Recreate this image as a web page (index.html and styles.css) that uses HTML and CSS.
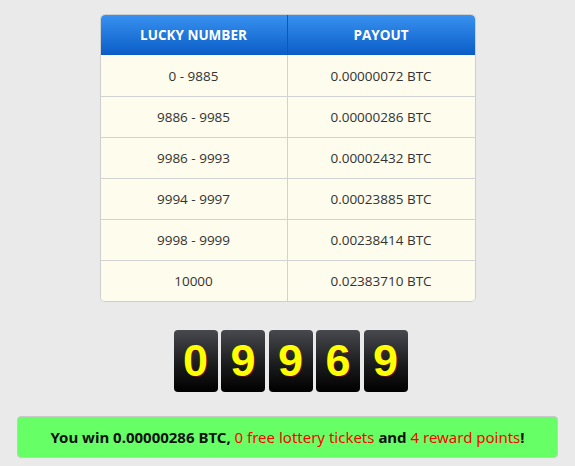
FILE: index.html
```html
<!DOCTYPE html>
<html>
<head>
<meta charset="utf-8">
<link rel="stylesheet" href="styles.css">
</head>
<body>
<div class="page">
  <table class="payouts">
    <thead>
      <tr><th>LUCKY NUMBER</th><th>PAYOUT</th></tr>
    </thead>
    <tbody>
      <tr><td>0 - 9885</td><td>0.00000072 BTC</td></tr>
      <tr><td>9886 - 9985</td><td>0.00000286 BTC</td></tr>
      <tr><td>9986 - 9993</td><td>0.00002432 BTC</td></tr>
      <tr><td>9994 - 9997</td><td>0.00023885 BTC</td></tr>
      <tr><td>9998 - 9999</td><td>0.00238414 BTC</td></tr>
      <tr><td>10000</td><td>0.02383710 BTC</td></tr>
    </tbody>
  </table>
  <div class="digits">
    <span class="digit">0</span><span class="digit">9</span><span class="digit">9</span><span class="digit">6</span><span class="digit">9</span>
  </div>
  <div class="result">You win 0.00000286 BTC, <span class="red">0 free lottery tickets</span> and <span class="red">4 reward points</span>!</div>
</div>
</body>
</html>
```
FILE: styles.css
```css
html, body {
  margin: 0;
  padding: 0;
  background: #eaeaea;
}
.page {
  width: 575px;
  padding-top: 15px;
  display: flex;
  flex-direction: column;
  align-items: center;
}
.payouts {
  width: 374px;
  border-collapse: separate;
  border-spacing: 0;
  font-family: "Open Sans", sans-serif;
  font-size: 13.5px;
  color: #333;
  border-radius: 4px;
  box-shadow: 0 0 0 1px #cfcfcf;
  overflow: hidden;
}
.payouts th {
  height: 40px;
  padding: 0;
  color: #fff;
  font-weight: bold;
  font-size: 13.5px;
  background: linear-gradient(#3891f0, #0a5dc6);
  width: 50%;
}
.payouts th:first-child {
  border-right: 1px solid #0b5aba;
  border-top-left-radius: 4px;
}
.payouts th:last-child {
  border-top-right-radius: 4px;
}
.payouts td {
  height: 40px;
  padding: 0;
  text-align: center;
  background: #fefcec;
  border-top: 1px solid #d2d2d2;
}
.payouts tbody tr:first-child td {
  border-top: none;
  height: 41px;
}
.payouts td:first-child {
  border-right: 1px solid #d2d2d2;
}
.digits {
  display: flex;
  gap: 3.5px;
  margin-top: 29px;
  padding-left: 6px;
}
.digit {
  width: 44px;
  height: 62px;
  border-radius: 4px;
  background: linear-gradient(#47494e, #1b1c1e 55%, #000);
  color: #ffff00;
  font-family: "Liberation Sans", Arial, sans-serif;
  font-weight: bold;
  font-size: 45px;
  line-height: 62px;
  text-align: center;
  text-shadow: 1px 1px 0 #5a1010;
}
.result {
  margin-top: 24px;
  width: 539px;
  height: 40px;
  background: #66ff66;
  border: 1px solid #c8c8c8;
  border-radius: 4px;
  font-family: "Noto Sans", "Open Sans", sans-serif;
  font-weight: bold;
  font-size: 15px;
  line-height: 40px;
  color: #111;
  text-align: center;
}
.red {
  color: #ff0000;
  font-weight: normal;
}
```
